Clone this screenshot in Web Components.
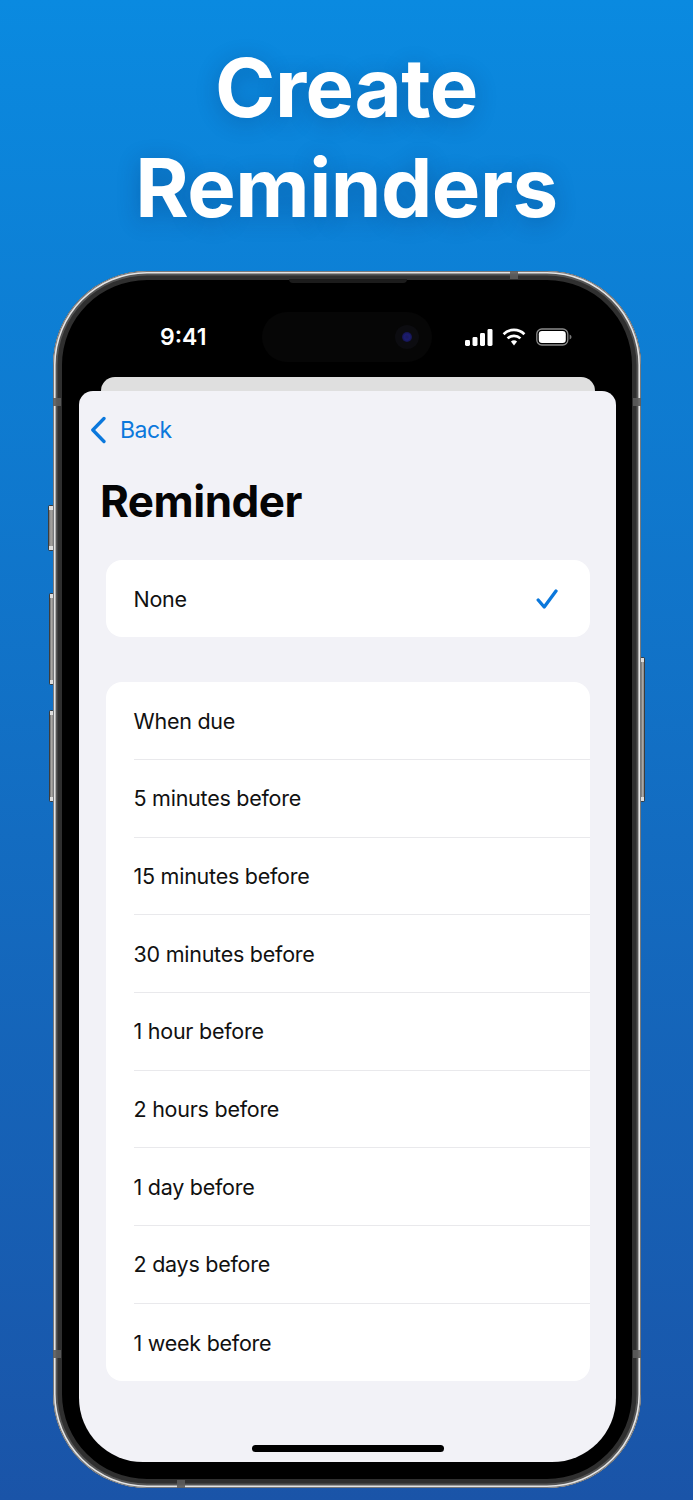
<!DOCTYPE html>
<html><head><meta charset="utf-8">
<style>
html,body{margin:0;padding:0}
body{width:693px;height:1500px;overflow:hidden;background:linear-gradient(180deg,#0a8ae0 0%,#1a54a8 100%);font-family:Inter,"Liberation Sans",sans-serif}
</style></head>
<body>
<promo-title>Create<br>Reminders</promo-title>
<phone-frame>
  <status-bar slot="status"></status-bar>
  <reminder-sheet>
    <nav-back>Back</nav-back>
    <sheet-title>Reminder</sheet-title>
    <option-group style="margin-bottom:45.300px;--row-h:77px">
      <option-row checked last>None</option-row>
    </option-group>
    <option-group>
      <option-row>When due</option-row>
      <option-row>5 minutes before</option-row>
      <option-row>15 minutes before</option-row>
      <option-row>30 minutes before</option-row>
      <option-row>1 hour before</option-row>
      <option-row>2 hours before</option-row>
      <option-row>1 day before</option-row>
      <option-row>2 days before</option-row>
      <option-row last>1 week before</option-row>
    </option-group>
  </reminder-sheet>
</phone-frame>
<script>
function def(name,html,init){
  customElements.define(name,class extends HTMLElement{
    constructor(){super();this.attachShadow({mode:'open'}).innerHTML=html;}
    connectedCallback(){if(init)init(this);}
  });
}
def('promo-title',`<style>:host{display:block;height:271px;box-sizing:border-box;padding-top:38px;text-align:center;color:#fff;font:700 81.5px/100px Inter,"Liberation Sans",sans-serif;letter-spacing:-.5px;text-shadow:0 4px 22px rgba(0,30,80,.28)}</style><slot></slot>`);

def('phone-frame',`<style>
:host{display:block;position:relative;width:588px;height:1217px;margin-left:53px}
.body{position:absolute;inset:0;border-radius:94px;background:#000;box-shadow:inset 0 0 0 1px #77797c,inset 0 0 0 2.600px #e4e4e4,inset 0 0 0 4.500px #555,inset 0 0 0 9px #2f2f2f;display:flex;flex-direction:column;box-sizing:border-box;padding:0 25px 26px 26px}
.speaker{position:absolute;left:236px;top:8px;width:118px;height:4px;border-radius:0 0 6px 6px;background:#1c1c1c}
.btn{position:absolute;background:linear-gradient(180deg,#ddd 0,#ddd 4px,transparent 4px,transparent calc(100% - 4px),#ddd calc(100% - 4px),#ddd 100%),linear-gradient(90deg,#6e6e6e,#a9a7a4 50%,#8a8886);border:1px solid #3c3c3c;box-sizing:border-box;border-radius:1.5px}
.band{position:absolute;background:rgba(92,92,92,.9)}
</style>
<div class="btn" style="left:-5px;top:234px;width:6px;height:46px"></div>
<div class="btn" style="left:-4px;top:322px;width:5px;height:92px"></div>
<div class="btn" style="left:-4px;top:439px;width:5px;height:92px"></div>
<div class="btn" style="right:-4px;top:386px;width:5px;height:145px"></div>
<div class="body">
  <slot name="status"></slot>
  <slot></slot>
  <div class="speaker"></div>
  <div class="band" style="left:0;top:127px;width:8px;height:8px"></div>
  <div class="band" style="right:0;top:127px;width:8px;height:8px"></div>
  <div class="band" style="left:0;top:1079px;width:8px;height:8px"></div>
  <div class="band" style="right:0;top:1079px;width:8px;height:8px"></div>
  <div class="band" style="left:457px;top:0;width:8px;height:8px"></div>
  <div class="band" style="left:124px;bottom:0;width:8px;height:8px"></div>
</div>`);

def('status-bar',`<style>
:host{display:flex;align-items:center;height:106px;box-sizing:border-box;padding-top:26px;color:#fff;flex:none}
.time{font:600 23px/1 Inter,"Liberation Sans",sans-serif;width:56px;margin-left:81px;text-align:left}
.island{width:170px;height:50px;margin-left:46px;border-radius:25px;background:#060606;display:flex;align-items:center;justify-content:flex-end;padding-right:13px;box-sizing:border-box;flex:none}
.cam{width:24px;height:24px;border-radius:50%;background:#0c0c10;display:flex;align-items:center;justify-content:center}
.cam i{display:block;width:10px;height:10px;border-radius:50%;background:radial-gradient(circle,#1a1a5a 0,#1c1c70 40%,#0c0c2a 100%)}
svg{display:block;flex:none}
</style>
<div class="time">9:41</div>
<div class="island"><div class="cam"><i></i></div></div>
<svg style="margin-left:33px" width="28" height="17" viewBox="0 0 28 17" fill="#fff"><rect x="0" y="11" width="5" height="6" rx="1.4"/><rect x="7.5" y="8" width="5" height="9" rx="1.4"/><rect x="15" y="4" width="5" height="13" rx="1.4"/><rect x="22.5" y="0" width="5" height="17" rx="1.4"/></svg>
<svg style="margin-left:9px" width="24" height="18" viewBox="0 0 24 18"><g fill="none" stroke="#fff" stroke-width="2.7"><path d="M1.600 6.200a14.800 14.800 0 0 1 20.800 0"/><path d="M5.600 10.400a9.200 9.200 0 0 1 12.800 0"/></g><path d="M8.900 13.600a4.500 4.500 0 0 1 6.200 0L12 17.400z" fill="#fff"/></svg>
<svg style="margin-left:10px" width="36" height="18" viewBox="0 0 36 18"><rect x=".8" y="1" width="31" height="16" rx="5" fill="none" stroke="#8a8a8a" stroke-width="1.3"/><rect x="2.800" y="3" width="27" height="12" rx="3.200" fill="#fff"/><path d="M33.600 6.500c1.200.4 1.900 1.400 1.900 2.500s-.7 2.100-1.900 2.500z" fill="#777"/></svg>`);

def('reminder-sheet',`<style>
:host{display:block;flex:1;position:relative;margin-top:14px;min-height:0}
.back{position:absolute;left:22px;right:21px;top:-14px;height:40px;background:#dfdfdf;border-radius:14px 14px 0 0}
.front{position:absolute;inset:0;background:#f2f2f7;border-radius:14px 14px 64px 64px;overflow:hidden;padding:0 26px 0 27px;box-sizing:border-box}
.home{position:absolute;left:173px;width:192px;bottom:10px;height:7px;border-radius:4px;background:#000}
</style>
<div class="back"></div>
<div class="front"><slot></slot><div class="home"></div></div>`);

def('nav-back',`<style>
:host{display:flex;align-items:center;height:78px;margin-left:-16px;color:#0b78dc;font:400 23px/1 Inter,"Liberation Sans",sans-serif;letter-spacing:-.5px;box-sizing:border-box}
svg{display:block;margin-right:14px;flex:none}
</style>
<svg width="16" height="28" viewBox="0 0 16 28"><path d="M14 2.500 2.800 14 14 25.500" fill="none" stroke="#0b78dc" stroke-width="3.300" stroke-linecap="round" stroke-linejoin="round"/></svg><slot></slot>`);

def('sheet-title',`<style>:host{display:block;margin-left:-6px;height:91px;font:700 44px/65px Inter,"Liberation Sans",sans-serif;color:#050505;letter-spacing:-.5px}</style><slot></slot>`);

def('option-group',`<style>:host{display:block;background:#fff;border-radius:16px;overflow:hidden}</style><slot></slot>`);

def('option-row',`<style>
:host{display:block;padding-left:27.500px;color:#111;font:400 21.500px/1 Inter,"Liberation Sans",sans-serif;letter-spacing:-.25px}
.in{height:var(--row-h,77.700px);box-sizing:border-box;display:flex;align-items:center;justify-content:space-between;border-bottom:1px solid #e9e9ec;padding-right:32px}
.in span{padding-top:1.500px}
:host([last]) .in{border-bottom:0}
svg{display:none}
:host([checked]) svg{display:block}
</style>
<div class="in"><span><slot></slot></span><svg width="22" height="20" viewBox="0 0 22 20"><path d="M2.200 11l6 7L20 2" fill="none" stroke="#0b78dc" stroke-width="3.300" stroke-linecap="round" stroke-linejoin="round"/></svg></div>`);
</script>
</body></html>
